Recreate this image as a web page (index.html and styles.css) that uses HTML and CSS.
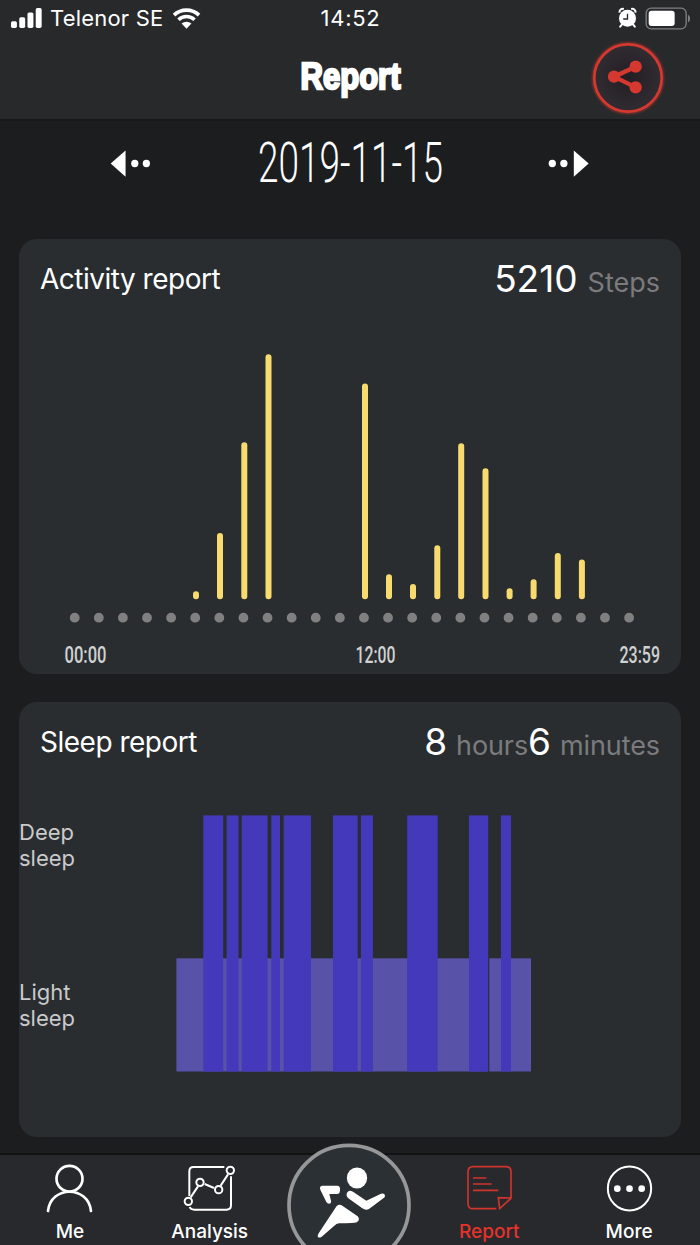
FILE: index.html
```
<!DOCTYPE html>
<html lang="en">
<head>
  <meta charset="UTF-8" />
  <title>Report</title>
  <meta name="viewport" content="width=device-width, initial-scale=1.0" />
  <link rel="stylesheet" href="styles.css">
</head>
<body>
  <div class="app">
    <header class="header">
      <div class="status-bar">
        <div class="status-left">
          <svg class="signal" viewBox="33 24 94 60">
            <rect x="33" y="64" width="18" height="20" rx="5" />
            <rect x="58" y="52" width="18" height="32" rx="5" />
            <rect x="83" y="37" width="18" height="47" rx="5" />
            <rect x="108" y="24" width="18" height="60" rx="5" />
          </svg>
          <span class="carrier">Telenor SE</span>
          <svg class="wifi" viewBox="516 24 86 64">
            <path d="M521 46a55 55 0 0 1 76 0" fill="none" stroke="#fff" stroke-width="11.500" />
            <path d="M534.500 60a35 35 0 0 1 49 0" fill="none" stroke="#fff" stroke-width="10.500" />
            <path d="M544 71.500a22 22 0 0 1 30 0L559 87z" />
          </svg>
        </div>
        <span class="clock">14:52</span>
        <div class="status-right">
          <svg class="alarm" viewBox="807 23 56 60">
            <circle cx="835" cy="54" r="25.500" />
            <path d="M811 37c-1-8 6-13 13-11M859 37c1-8-6-13-13-11" fill="none" stroke="#fff" stroke-width="6" />
            <path d="M818 73l-5 6M852 73l5 6" stroke="#fff" stroke-width="6" stroke-linecap="round" />
            <path d="M835 40v16h-13" fill="none" stroke="#28292b" stroke-width="4" />
          </svg>
          <svg class="battery" viewBox="886 20 138 69">
            <rect x="889.500" y="23.500" width="120" height="62" rx="15" fill="none" stroke="#7f8082" stroke-width="4" />
            <rect x="897" y="31" width="78" height="46" rx="9" />
            <path d="M1015 43c8 4 8 20 0 23z" fill="#7f8082" />
          </svg>
        </div>
      </div>
      <div class="title-row">
        <svg class="title" viewBox="0 0 104 54">
          <text x="2.500" y="38" textLength="100" lengthAdjust="spacingAndGlyphs">Report</text>
        </svg>
        <svg class="share" viewBox="717 118 234 234">
          <defs>
            <radialGradient id="shareBg">
              <stop offset="0" stop-color="#221e23" />
              <stop offset="1" stop-color="#302c32" />
            </radialGradient>
            <filter id="glow" x="-20%" y="-20%" width="140%" height="140%">
              <feGaussianBlur stdDeviation="5" />
            </filter>
          </defs>
          <circle cx="834" cy="235" r="101" fill="none" stroke="#b3342c" stroke-width="10" filter="url(#glow)" />
          <circle cx="834" cy="235" r="101" fill="url(#shareBg)" stroke="#d4382f" stroke-width="8" />
          <g fill="#d4382f" stroke="#d4382f">
            <path d="M857 201L792 231L857 263" fill="none" stroke-width="13" />
            <circle cx="792" cy="231" r="18.500" stroke="none" />
            <circle cx="857" cy="201" r="18.500" stroke="none" />
            <circle cx="857" cy="263" r="18.500" stroke="none" />
          </g>
        </svg>
      </div>
    </header>

    <main class="content">
      <div class="date-nav">
        <svg class="arrow" viewBox="60 77 124 80">
          <path d="M62 117L107 78V157z" />
          <circle cx="135" cy="117" r="11" />
          <circle cx="170" cy="117" r="11" />
        </svg>
        <svg class="date" viewBox="0 0 186 72">
          <text x="1" y="50" textLength="185" lengthAdjust="spacingAndGlyphs">2019-11-15</text>
        </svg>
        <svg class="arrow" viewBox="1374 77 124 80">
          <path d="M1497 117L1452 78V157z" />
          <circle cx="1387" cy="117" r="11" />
          <circle cx="1422" cy="117" r="11" />
        </svg>
      </div>

      <section class="card">
        <div class="card-head">
          <h2>Activity report</h2>
          <div class="total"><b>5210</b><span>Steps</span></div>
        </div>
        <svg class="chart" viewBox="19 319 662 354">
          <g class="bars">
            <rect x="193" y="591.300" width="6" height="7.900" rx="3" />
            <rect x="217" y="533" width="6" height="66.200" rx="3" />
            <rect x="241.300" y="442.300" width="6" height="156.900" rx="3" />
            <rect x="265.500" y="354.300" width="6" height="244.900" rx="3" />
            <rect x="362" y="383.600" width="6" height="215.600" rx="3" />
            <rect x="386" y="574.300" width="6" height="24.900" rx="3" />
            <rect x="410" y="584" width="6" height="15.200" rx="3" />
            <rect x="434.300" y="545.200" width="6" height="54" rx="3" />
            <rect x="458.200" y="443.300" width="6" height="155.900" rx="3" />
            <rect x="482.500" y="468.300" width="6" height="130.900" rx="3" />
            <rect x="506.600" y="588.300" width="6" height="10.900" rx="3" />
            <rect x="530.600" y="579.300" width="6" height="19.900" rx="3" />
            <rect x="554.800" y="553" width="6" height="46.200" rx="3" />
            <rect x="578.900" y="559.600" width="6" height="39.600" rx="3" />
          </g>
          <!-- one dot per hour -->
          <path class="hours" d="M74.700 617.700H629.100" />
          <g class="times">
            <text x="64.500" y="662.700" textLength="42" lengthAdjust="spacingAndGlyphs">00:00</text>
            <text x="355.500" y="662.700" textLength="40" lengthAdjust="spacingAndGlyphs">12:00</text>
            <text x="619.500" y="662.700" textLength="40.500" lengthAdjust="spacingAndGlyphs">23:59</text>
          </g>
        </svg>
      </section>

      <section class="card">
        <div class="card-head">
          <h2>Sleep report</h2>
          <div class="total sleep-total"><b>8</b><span>hours</span><b>6</b><span>minutes</span></div>
        </div>
        <div class="sleep">
          <div class="levels">
            <p>Deep<br>sleep</p>
            <p>Light<br>sleep</p>
          </div>
          <svg class="sleep-chart" viewBox="176 815 356 257">
            <g fill="#5952a9">
              <rect x="176.400" y="958.300" width="311" height="113.200" />
              <rect x="489.300" y="958.300" width="41.700" height="113.200" />
            </g>
            <g fill="#4339ba">
              <rect x="203.300" y="815.400" width="19.900" height="256.100" />
              <rect x="226.600" y="815.400" width="12" height="256.100" />
              <rect x="241.700" y="815.400" width="25.900" height="256.100" />
              <rect x="271.300" y="815.400" width="8.700" height="256.100" />
              <rect x="283.700" y="815.400" width="27.300" height="256.100" />
              <rect x="333" y="815.400" width="24.700" height="256.100" />
              <rect x="360.900" y="815.400" width="12" height="256.100" />
              <rect x="407.200" y="815.400" width="30.500" height="256.100" />
              <rect x="469" y="815.400" width="19.200" height="256.100" />
              <rect x="501" y="815.400" width="10" height="256.100" />
            </g>
          </svg>
        </div>
      </section>
    </main>

    <nav class="tabs">
      <a class="tab">
        <svg class="icon" viewBox="138 133 141 147" stroke-width="8">
          <ellipse cx="208.500" cy="177" rx="39" ry="38.500" />
          <path d="M144 274C152 197 265 197 273 274" stroke-linecap="round" />
        </svg>
        <span>Me</span>
      </a>
      <a class="tab">
        <svg class="icon" viewBox="557 133 141 147" stroke-width="6">
          <path d="M672 142H580Q567 142 567 155V229M568 262Q571 270 582 270H679Q692 270 692 257V170" />
          <path d="M571 233L593 200M613 193L641 205M661 198L683 164" />
          <circle cx="564" cy="245" r="11" />
          <circle cx="599" cy="188" r="11" />
          <circle cx="655" cy="210" r="11" />
          <circle cx="690" cy="152" r="11" />
        </svg>
        <span>Analysis</span>
      </a>
      <a class="tab">
        <svg class="run" viewBox="84 68 372 307">
          <circle cx="270" cy="254" r="180" fill="#2b3034" stroke="#969798" stroke-width="11" />
          <g fill="#fff">
            <ellipse cx="294" cy="172" rx="30.500" ry="31.500" />
            <path d="M190 195H235Q243 196 243 204V210Q242 220 234 220H211L216 240Q218 248 210 249Q205 249 202 244L184 207Q180 197 190 195Z" />
            <path d="M282 213L322 240L366 219Q377 216 378 225Q378 230 373 233L330 265Q320 270 310 263L268 233Q260 225 264 216Q270 206 282 213Z" />
            <path d="M233 256Q241 249 250 255L296 287Q305 298 293 305Q287 308 240 308Q232 309 226 315L188 348Q180 353 177 349Q174 345 180 336Z" />
          </g>
        </svg>
      </a>
      <a class="tab active">
        <svg class="icon" viewBox="76 133 141 147" stroke-width="5">
          <path d="M167 267H97Q82 267 82 252V157Q82 141 97 141H196Q211 141 211 156V236L177 267L173 234L209 235" />
          <path d="M97 175H137M97 193H153M97 212H173" />
        </svg>
        <span>Report</span>
      </a>
      <a class="tab">
        <svg class="icon" viewBox="495 133 141 147" stroke-width="6">
          <ellipse cx="565.500" cy="206.500" rx="65" ry="66" />
          <g fill="#fff" stroke="none">
            <circle cx="529" cy="207" r="10" />
            <circle cx="565.500" cy="207" r="10" />
            <circle cx="602" cy="207" r="10" />
          </g>
        </svg>
        <span>More</span>
      </a>
    </nav>
  </div>
</body>
</html>
```
FILE: styles.css
```
* {
  box-sizing: border-box;
}

body {
  margin: 0;
  background: #1c1d1f;
  color: #fff;
  font-family: Inter, Roboto, sans-serif;
}

svg {
  display: block;
  fill: #fff;
  flex-shrink: 0;
  overflow: visible;
}

.app {
  width: 700px;
  height: 1245px;
  display: flex;
  flex-direction: column;
  overflow: hidden;
}

/* header */
.header {
  height: 121px;
  background: #28292b;
  border-bottom: 2px solid #19191b;
}

.status-bar {
  height: 36px;
  padding: 0 10px 0 11px;
  display: grid;
  grid-template-columns: 1fr auto 1fr;
  align-items: center;
  font-size: 22px;
}

.status-left, .status-right {
  display: flex;
  align-items: center;
}

.status-right {
  justify-content: flex-end;
  gap: 8px;
}

.signal {
  width: 31px;
  height: 20px;
}

.carrier {
  margin: 0 9px 0 8px;
  letter-spacing: 0.2px;
}

.wifi {
  width: 29px;
  height: 21px;
}

.clock {
  letter-spacing: 0.7px;
}

.alarm {
  width: 19px;
  height: 20px;
}

.battery {
  width: 46px;
  height: 23px;
  margin-right: -1px;
}

.title-row {
  height: 84px;
  display: grid;
  grid-template-columns: 1fr 104px 1fr;
  align-items: center;
}

.title {
  grid-column: 2;
  width: 104px;
  height: 54px;
}

.title text {
  font: 700 36px "Liberation Sans", Arial, sans-serif;
  stroke: #fff;
  stroke-width: 2.4px;
}

.share {
  width: 78px;
  height: 78px;
  justify-self: end;
  margin-right: 33px;
}

/* content */
.content {
  flex: 1;
  padding: 0 19px;
}

.date-nav {
  height: 118px;
  padding: 11px 92px 0 91px;
  display: flex;
  justify-content: space-between;
  align-items: flex-start;
}

.arrow {
  width: 41px;
  height: 27px;
  margin-top: 18px;
}

.date {
  width: 186px;
  height: 72px;
}

.date text {
  font: 300 56px Roboto, sans-serif;
}

.card {
  height: 435px;
  margin-bottom: 28px;
  background: #292d30;
  border-radius: 18px;
}

.card:last-child {
  margin-bottom: 0;
}

.card-head {
  height: 80px;
  padding: 0 21px;
  display: flex;
  justify-content: space-between;
  align-items: center;
}

.card-head h2 {
  margin: 0;
  font-size: 28px;
  font-weight: 400;
  letter-spacing: -0.5px;
}

.total {
  display: flex;
  align-items: baseline;
  padding-bottom: 2px;
  color: #7b7b7d;
  font-size: 27px;
}

.total b {
  color: #fff;
  font-size: 37px;
  font-weight: 400;
}

.total span {
  margin-left: 10px;
}

.sleep-total span {
  margin-left: 9px;
  letter-spacing: -0.1px;
}

.chart {
  width: 662px;
  height: 354px;
}

.bars {
  fill: #f7db6f;
}

.hours {
  stroke: #808080;
  stroke-width: 9.8;
  stroke-linecap: round;
  stroke-dasharray: 0 24.104;
}

.times {
  fill: #d0d1d2;
  font: 500 23px Roboto, sans-serif;
}

.sleep {
  display: flex;
  padding-top: 33px;
}

.levels {
  width: 157px;
  font-size: 22px;
  line-height: 26px;
  color: #c9cacb;
}

.levels p {
  margin: 4px 0 108px;
}

.sleep-chart {
  width: 356px;
  height: 257px;
}

/* bottom tabs */
.tabs {
  height: 92px;
  padding-right: 1px;
  display: grid;
  grid-template-columns: repeat(5, 1fr);
  background: #28292c;
  border-top: 2px solid #111214;
}

.tab {
  display: flex;
  flex-direction: column;
  align-items: center;
  font-size: 19px;
  line-height: 24px;
  font-weight: 500;
}

.icon {
  width: 47px;
  height: 49px;
  margin: 9px 0 7px;
  fill: none;
  stroke: #fff;
}

.run {
  width: 124px;
  height: 103px;
  margin-top: -12px;
}

.active {
  color: #e5322a;
}

.active .icon {
  stroke: #cf342d;
}
```
